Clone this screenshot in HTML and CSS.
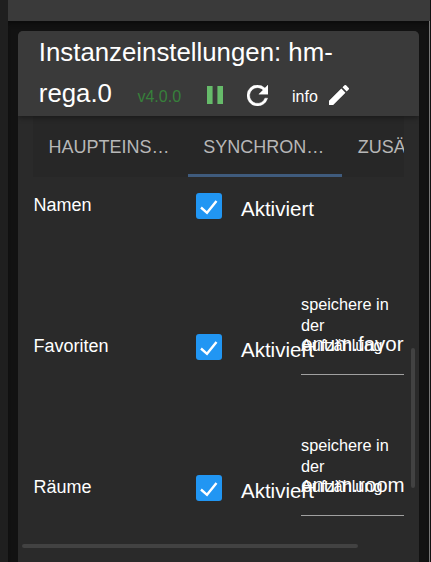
FILE: index.html
```html
<!DOCTYPE html>
<html lang="de">

<head>
    <meta charset="UTF-8">
    <meta name="viewport" content="width=device-width, initial-scale=1.0">
    <title>Instanzeinstellungen: hm-rega.0</title>
    <link rel="stylesheet" href="styles.css">
</head>

<body>
    <div class="menu-edge"></div>
    <div class="page">
        <div class="app-bar"></div>
        <div class="content">
            <div class="card">
                <div class="card-header">
                    <h1 class="title">Instanzeinstellungen: hm-</h1>
                    <div class="title-row">
                        <span class="title">rega.0</span>
                        <span class="version">v4.0.0</span>
                        <svg class="icon-pause" viewBox="0 0 16 18"><path d="M0 0h5.6v18H0zM10.4 0H16v18h-5.6z"/></svg>
                        <svg class="icon-reload" viewBox="4 4 16 16"><path d="M17.65 6.35A7.958 7.958 0 0 0 12 4a8 8 0 1 0 7.73 10h-2.08A5.99 5.99 0 1 1 12 6c1.66 0 3.14.69 4.22 1.78L13 11h7V4l-2.35 2.35z"/></svg>
                        <span class="info">info</span>
                        <svg class="icon-edit" viewBox="3 3 18 18"><path d="M3 17.25V21h3.75L17.81 9.94l-3.75-3.75L3 17.25zM20.71 7.04a.996.996 0 0 0 0-1.41l-2.34-2.34a.996.996 0 0 0-1.41 0l-1.83 1.83 3.75 3.75 1.83-1.83z"/></svg>
                    </div>
                </div>

                <div class="card-body">
                    <div class="tabs">
                        <div class="tab">HAUPTEINS…</div>
                        <div class="tab active">SYNCHRON…</div>
                        <div class="tab">ZUSÄTZLICH</div>
                    </div>

                    <div class="row row-short">
                        <div class="name">Namen</div>
                        <div class="checkbox"><svg viewBox="0 0 26 26"><path d="M5 14.5l6 5.3L20.5 8"/></svg></div>
                        <div class="state">Aktiviert</div>
                    </div>

                    <div class="row">
                        <div class="name">Favoriten</div>
                        <div class="checkbox"><svg viewBox="0 0 26 26"><path d="M5 14.5l6 5.3L20.5 8"/></svg></div>
                        <div class="state">Aktiviert</div>
                        <div class="field">
                            <div class="label">speichere in der Aufzählung</div>
                            <div class="value">enum.favorites</div>
                        </div>
                    </div>

                    <div class="row">
                        <div class="name">Räume</div>
                        <div class="checkbox"><svg viewBox="0 0 26 26"><path d="M5 14.5l6 5.3L20.5 8"/></svg></div>
                        <div class="state">Aktiviert</div>
                        <div class="field">
                            <div class="label">speichere in der Aufzählung</div>
                            <div class="value">enum.rooms</div>
                        </div>
                    </div>

                    <div class="scroll-y"></div>
                    <div class="scroll-x"></div>
                </div>
            </div>
        </div>
    </div>
</body>

</html>
```

FILE: styles.css
```css
* {
    box-sizing: border-box;
}

body {
    display: flex;
    height: 562px;
    margin: 0;
    overflow: hidden;
    background: #121212;
    color: #fff;
    font-family: "Liberation Sans", Arial, sans-serif;
}

.menu-edge {
    width: 8px;
    background: #1f1f1f;
}

.page {
    display: flex;
    flex-direction: column;
    width: 423px;
}

.app-bar {
    height: 21px;
    margin-right: 1px;
    background: #3a3a3a;
}

.content {
    flex: 1;
    width: 422px;
    padding: 10px 10px 0;
    border-right: 1px solid #777;
    box-shadow: inset 0 5px 5px -3px #0a0a0a;
}

.card {
    display: flex;
    flex-direction: column;
    width: 401px;
    height: 100%;
    border-radius: 5px 5px 0 0;
    overflow: hidden;
    background: #2a2a2a;
}

/* Kopfzeile */
.card-header {
    position: relative;
    z-index: 1;
    height: 85px;
    padding: 1px 0 0 20.8px;
    background: #3a3a3a;
    box-shadow: 0 2px 5px rgba(0, 0, 0, 0.35);
}

.title {
    margin: 0;
    font-size: 25.8px;
    font-weight: 400;
    line-height: 41px;
}

.title-row {
    display: flex;
    align-items: center;
    height: 41px;
}

.version {
    margin: 6px 0 0 25.5px;
    font-size: 16px;
    color: #37803b;
}

.icon-pause {
    width: 16px;
    height: 18px;
    margin: 3px 0 0 25.5px;
    fill: #66bb6a;
}

.icon-reload {
    width: 21px;
    height: 21px;
    margin: 3px 0 0 24.5px;
    fill: #fff;
    stroke: #fff;
    stroke-width: 0.3;
}

.info {
    margin: 6px 0 0 24px;
    font-size: 16px;
}

.icon-edit {
    width: 20px;
    height: 20px;
    margin: 3px 0 0 11px;
    fill: #fff;
}

/* Inhalt */
.card-body {
    position: relative;
    flex: 1;
    padding: 0 15px;
}

.tabs {
    display: flex;
    height: 61px;
    overflow: hidden;
    background: #272727;
}

.tab {
    flex: 0 0 154.6px;
    padding: 0 0 0 15.6px;
    font-size: 18px;
    line-height: 62px;
    color: #b7b7b7;
}

.tab.active {
    border-bottom: 3px solid #3f5b7d;
}

.row {
    display: grid;
    grid-template-columns: 163px 45px 60px 103px;
    height: 141px;
    padding-top: 57px;
}

.row-short {
    height: 100px;
    padding-top: 16px;
}

.name {
    padding: 2px 0 0 0.6px;
    font-size: 18px;
    line-height: 20px;
}

.checkbox {
    width: 26px;
    height: 26px;
    border-radius: 3px;
    background: #2196f3;
}

.checkbox svg {
    display: block;
    fill: none;
    stroke: #fff;
    stroke-width: 2.4;
}

.state {
    padding-top: 4px;
    font-size: 20.5px;
    line-height: 24px;
    white-space: nowrap;
}

.field {
    position: relative;
    height: 80px;
    margin-top: -39px;
    border-bottom: 1px solid #a0a0a0;
    overflow: hidden;
}

.label {
    margin-top: -1px;
    font-size: 16.3px;
    line-height: 20.5px;
}

/* Wert liegt über der letzten Zeile des Labels */
.value {
    position: absolute;
    top: 37px;
    left: 0;
    font-size: 20.5px;
    line-height: 24px;
}

/* Scrollbalken */
.scroll-y {
    position: absolute;
    top: 232px;
    right: 4px;
    width: 4px;
    height: 140px;
    border-radius: 2px;
    background: #424242;
}

.scroll-x {
    position: absolute;
    top: 428px;
    left: 4px;
    width: 336px;
    height: 4px;
    border-radius: 2px;
    background: #424242;
}
```
